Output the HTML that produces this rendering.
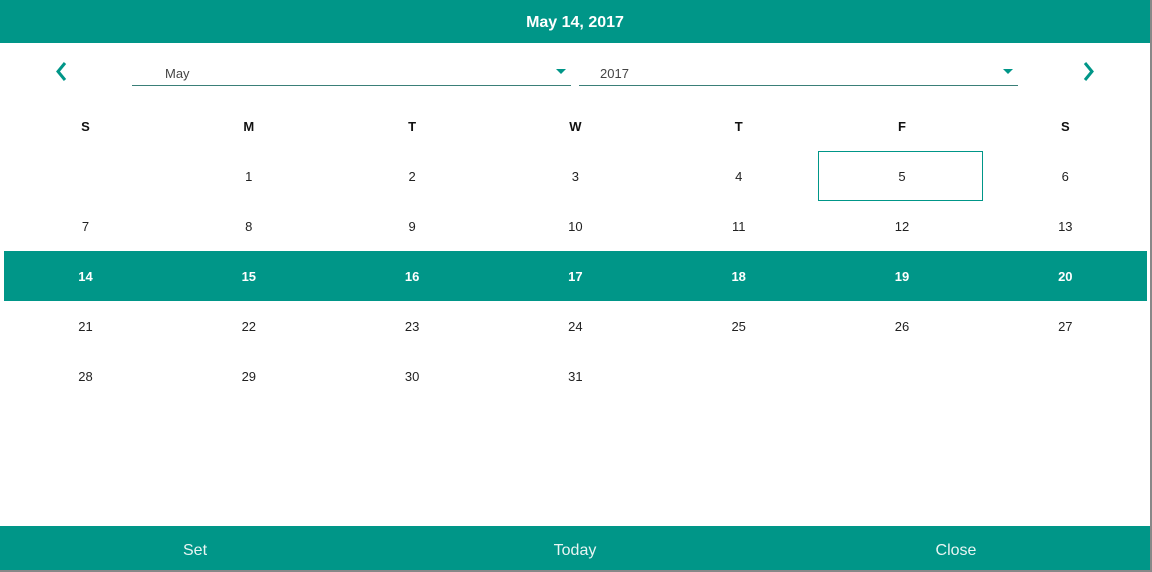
<!DOCTYPE html>
<html><head><style>
body{margin:0;width:1152px;height:572px;background:#fff;font-family:"Liberation Sans",sans-serif;position:relative;overflow:hidden}
.hdr{position:absolute;left:0;top:0;width:1150px;height:43px;background:#009688;color:#fff;font-weight:bold;font-size:16px;text-align:center;line-height:45px}
.rb{position:absolute;right:0;top:0;width:2px;height:572px;background:#888}
.bb{position:absolute;left:0;top:570px;width:1152px;height:2px;background:#888}
.foot{position:absolute;left:0;top:526px;width:1150px;height:44px;background:#009688;color:#e8f5f3;font-size:16px}
.foot span{position:absolute;top:16px;transform:translateX(-50%)}
.dd{position:absolute;top:60px;height:25px;border-bottom:1px solid #3a7f78;font-size:13px;color:#444}
.dd span{position:absolute;top:6px}
.tri{position:absolute;top:9px;width:0;height:0;border-left:5px solid transparent;border-right:5px solid transparent;border-top:5px solid #009688}
.c{position:absolute;width:163px;height:50px;line-height:52px;text-align:center;font-size:13px;color:#222}
.h{font-weight:bold;font-size:13px;color:#111}
.sel{position:absolute;left:4px;top:251px;width:1143px;height:50px;background:#009688}
.w{color:#fff;font-weight:bold}
.box{position:absolute;left:818px;top:151px;width:163px;height:48px;border:1px solid #009688}
</style></head><body>
<div class="hdr">May 14, 2017</div>
<svg style="position:absolute;left:54px;top:61px" width="14" height="22"><path d="M11 2 L4 10.5 L11 19" stroke="#009688" stroke-width="3" fill="none"/></svg>
<svg style="position:absolute;left:1082px;top:61px" width="14" height="22"><path d="M3 2 L10 10.5 L3 19" stroke="#009688" stroke-width="3" fill="none"/></svg>
<div class="dd" style="left:132px;width:439px"><span style="left:33px">May</span><div class="tri" style="left:424px"></div></div>
<div class="dd" style="left:579px;width:439px"><span style="left:21px">2017</span><div class="tri" style="left:424px"></div></div>
<div class="sel"></div>
<div class="box"></div>
<div id="g"></div>
<div class="foot"><span style="left:195px">Set</span><span style="left:575px">Today</span><span style="left:956px">Close</span></div>
<div class="rb"></div><div class="bb"></div>
<script>
var g=document.getElementById('g'),h='';
var days=['S','M','T','W','T','F','S'];
function cell(i,r,t,cls){var x=4+i*163.3;var y=101+r*50;h+='<div class="c '+cls+'" style="left:'+x+'px;top:'+y+'px">'+t+'</div>';}
days.forEach(function(d,i){cell(i,0,d,'h')});
for(var d=1;d<=31;d++){var p=d+0;var r=Math.floor(p/7)+1,i=p%7;cell(i,r,d,r==3?'w':'');}
g.innerHTML=h;
</script>
</body></html>
